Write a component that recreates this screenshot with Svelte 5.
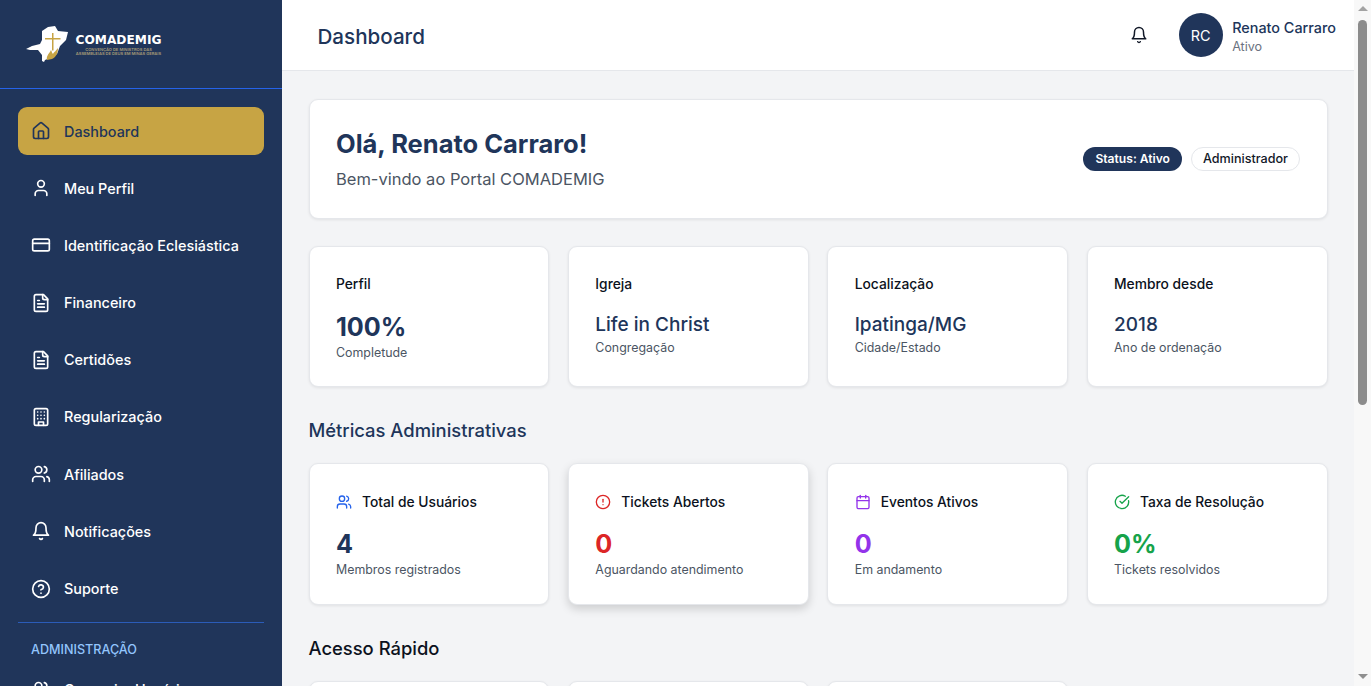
<script>
  const icons = {
    home: '<path d="M15 21v-8a1 1 0 0 0-1-1h-4a1 1 0 0 0-1 1v8"/><path d="M3 10a2 2 0 0 1 .709-1.528l7-5.999a2 2 0 0 1 2.582 0l7 5.999A2 2 0 0 1 21 10v9a2 2 0 0 1-2 2H5a2 2 0 0 1-2-2z"/>',
    user: '<path d="M19 21v-2a4 4 0 0 0-4-4H9a4 4 0 0 0-4 4v2"/><circle cx="12" cy="7" r="4"/>',
    card: '<rect width="20" height="14" x="2" y="5" rx="2"/><line x1="2" x2="22" y1="10" y2="10"/>',
    file: '<path d="M15 2H6a2 2 0 0 0-2 2v16a2 2 0 0 0 2 2h12a2 2 0 0 0 2-2V7Z"/><path d="M14 2v4a2 2 0 0 0 2 2h4"/><path d="M10 9H8"/><path d="M16 13H8"/><path d="M16 17H8"/>',
    building: '<rect width="16" height="20" x="4" y="2" rx="2"/><path d="M9 22v-4h6v4"/><path d="M8 6h.01M16 6h.01M12 6h.01M12 10h.01M12 14h.01M16 10h.01M16 14h.01M8 10h.01M8 14h.01"/>',
    users: '<path d="M16 21v-2a4 4 0 0 0-4-4H6a4 4 0 0 0-4 4v2"/><circle cx="9" cy="7" r="4"/><path d="M22 21v-2a4 4 0 0 0-3-3.87"/><path d="M16 3.13a4 4 0 0 1 0 7.75"/>',
    bell: '<path d="M6 8a6 6 0 0 1 12 0c0 7 3 9 3 9H3s3-2 3-9"/><path d="M10.3 21a1.94 1.94 0 0 0 3.4 0"/>',
    help: '<circle cx="12" cy="12" r="10"/><path d="M9.09 9a3 3 0 0 1 5.83 1c0 2-3 3-3 3"/><path d="M12 17h.01"/>',
    alert: '<circle cx="12" cy="12" r="10"/><line x1="12" x2="12" y1="8" y2="12"/><line x1="12" x2="12.01" y1="16" y2="16"/>',
    calendar: '<path d="M8 2v4"/><path d="M16 2v4"/><rect width="18" height="18" x="3" y="4" rx="2"/><path d="M3 10h18"/>',
    check: '<path d="M21.801 10A10 10 0 1 1 17 3.335"/><path d="m9 11 3 3L22 4"/>'
  };

  const nav = [
    { label: "Dashboard", icon: "home", active: true },
    { label: "Meu Perfil", icon: "user" },
    { label: "Identificação Eclesiástica", icon: "card" },
    { label: "Financeiro", icon: "file" },
    { label: "Certidões", icon: "file" },
    { label: "Regularização", icon: "building" },
    { label: "Afiliados", icon: "users" },
    { label: "Notificações", icon: "bell" },
    { label: "Suporte", icon: "help" }
  ];

  const info = [
    { title: "Perfil", value: "100%", note: "Completude", big: true },
    { title: "Igreja", value: "Life in Christ", note: "Congregação" },
    { title: "Localização", value: "Ipatinga/MG", note: "Cidade/Estado" },
    { title: "Membro desde", value: "2018", note: "Ano de ordenação" }
  ];

  const metrics = [
    { title: "Total de Usuários", value: "4", note: "Membros registrados", icon: "users", iconColor: "#2563eb", color: "#20355a" },
    { title: "Tickets Abertos", value: "0", note: "Aguardando atendimento", icon: "alert", iconColor: "#dc2626", color: "#dc2626", hover: true },
    { title: "Eventos Ativos", value: "0", note: "Em andamento", icon: "calendar", iconColor: "#9333ea", color: "#9333ea" },
    { title: "Taxa de Resolução", value: "0%", note: "Tickets resolvidos", icon: "check", iconColor: "#16a34a", color: "#16a34a" }
  ];
</script>

{#snippet icon(name, size, color)}
  <svg class="icon" width={size} height={size} viewBox="0 0 24 24" fill="none" stroke={color} stroke-width="2" stroke-linecap="round" stroke-linejoin="round">
    {@html icons[name]}
  </svg>
{/snippet}

<div class="page">
  <aside class="sidebar">
    <div class="brand">
      <svg class="state" width="43" height="37" viewBox="0 0 43 37">
        <path fill="#fff" d="M0 23 L6 20 L14 18 L16 14 L16 5 L22 1 L29 0 L32 5 L42 6 L40 14 L34 20 L31 28 L24 32 L19 34 L18 36 L16 35 L16 29 L12 24 L4 24 Z"/>
        <path fill="#c7a444" d="M21 34 C20 30 23 28 25 24 C26 26 26 27 27 28 C28 26 29 26 32 22 C32 27 30 31 26 33 Z"/>
        <path fill="#c7a444" d="M26 7 h1.500 v5 h7 v1.500 h-7 v11 h-1.500 v-11 h-7 v-1.500 h7 Z"/>
      </svg>
      <div class="brand-text">
        <span class="brand-name">COMADEMIG</span>
        <span class="brand-sub">CONVENÇÃO DE MINISTROS DAS</span>
        <span class="brand-sub">ASSEMBLEIAS DE DEUS EM MINAS GERAIS</span>
      </div>
    </div>

    <nav class="nav">
      {#each nav as item}
        <div class="nav-item" class:active={item.active}>
          {@render icon(item.icon, 20, item.active ? "#20355a" : "#fff")}
          <span>{item.label}</span>
        </div>
      {/each}
      <div class="nav-sep"></div>
      <div class="nav-heading">ADMINISTRAÇÃO</div>
      <div class="nav-item">
        {@render icon("users", 20, "#fff")}
        <span>Gerenciar Usuários</span>
      </div>
    </nav>
  </aside>

  <div class="main">
    <header class="topbar">
      <h1>Dashboard</h1>
      <div class="topbar-right">
        {@render icon("bell", 18, "#111827")}
        <div class="avatar">RC</div>
        <div class="who">
          <div class="who-name">Renato Carraro</div>
          <div class="who-status">Ativo</div>
        </div>
      </div>
    </header>

    <main class="content">
      <section class="card welcome">
        <div>
          <h2>Olá, Renato Carraro!</h2>
          <p>Bem-vindo ao Portal COMADEMIG</p>
        </div>
        <div class="badges">
          <span class="badge dark">Status: Ativo</span>
          <span class="badge light">Administrador</span>
        </div>
      </section>

      <section class="grid info">
        {#each info as c}
          <div class="card stat">
            <div class="stat-title">{c.title}</div>
            <div class="stat-value" class:big={c.big}>{c.value}</div>
            <div class="stat-note">{c.note}</div>
          </div>
        {/each}
      </section>

      <h3 class="section muted">Métricas Administrativas</h3>
      <section class="grid">
        {#each metrics as m}
          <div class="card stat" class:hover={m.hover}>
            <div class="stat-title with-icon">
              {@render icon(m.icon, 16, m.iconColor)}
              <span>{m.title}</span>
            </div>
            <div class="stat-value big" style="color: {m.color}">{m.value}</div>
            <div class="stat-note">{m.note}</div>
          </div>
        {/each}
      </section>

      <h3 class="section">Acesso Rápido</h3>
      <section class="grid">
        <div class="card quick"></div>
        <div class="card quick"></div>
        <div class="card quick"></div>
      </section>
    </main>
  </div>

  <div class="scrollbar">
    <span class="arrow up"></span>
    <div class="track"><div class="thumb"></div></div>
    <span class="arrow down"></span>
  </div>
</div>

<style>
  :global(body) {
    margin: 0;
    font-family: Inter, "Noto Sans", sans-serif;
    background: #f3f4f6;
  }
  .page {
    display: flex;
    height: 686px;
    overflow: hidden;
  }
  .icon {
    flex: none;
    display: block;
  }

  .sidebar {
    width: 282px;
    flex: none;
    background: #20355a;
    color: #fff;
    overflow: hidden;
  }
  .brand {
    box-sizing: border-box;
    border-bottom: 1px solid #2563eb;
    height: 89px;
    display: flex;
    align-items: center;
    gap: 6px;
    padding-left: 26px;
  }
  .brand-text {
    display: flex;
    flex-direction: column;
    align-items: center;
    width: 87px;
    padding-top: 1px;
  }
  .brand-name {
    font-family: "DejaVu Sans", sans-serif;
    font-weight: 700;
    font-size: 12.2px;
    line-height: 15px;
  }
  .brand-sub {
    font-size: 4.1px;
    line-height: 3.6px;
    color: #a89c78;
    white-space: nowrap;
    font-weight: 600;
  }
  .nav {
    padding: 18px 18px 0;
    display: flex;
    flex-direction: column;
    gap: 9.2px;
  }
  .nav-item {
    display: flex;
    align-items: center;
    gap: 13px;
    height: 48px;
    flex: none;
    box-sizing: border-box;
    padding: 0 13px;
    border-radius: 9px;
    font-size: 14.4px;
    font-weight: 500;
    white-space: nowrap;
  }
  .nav-item.active {
    background: #c7a444;
    color: #20355a;
  }
  .nav-sep {
    border-top: 1px solid #2b5cb8;
  }
  .nav-heading {
    color: #93c5fd;
    font-size: 12.6px;
    font-weight: 500;
    padding: 9px 13px 0;
    margin-bottom: -2.5px;
    line-height: 18px;
  }

  .main {
    flex: 1;
    min-width: 0;
    display: flex;
    flex-direction: column;
  }
  .topbar {
    height: 71px;
    flex: none;
    box-sizing: border-box;
    background: #fff;
    border-bottom: 1px solid #e5e7eb;
    display: flex;
    align-items: center;
    justify-content: space-between;
    padding: 0 18px 0 35.5px;
  }
  h1 {
    margin: 2px 0 0;
    font-size: 20.6px;
    font-weight: 500;
    color: #20355a;
  }
  .topbar-right {
    display: flex;
    align-items: center;
  }
  .avatar {
    width: 44px;
    height: 44px;
    border-radius: 50%;
    background: #20355a;
    color: #fff;
    font-size: 14.4px;
    display: flex;
    align-items: center;
    justify-content: center;
    margin: 0 9.5px 0 31px;
  }
  .who {
    margin-top: 3px;
  }
  .who-name {
    font-size: 14.4px;
    font-weight: 500;
    line-height: 20px;
    color: #20355a;
  }
  .who-status {
    font-size: 12.6px;
    line-height: 18px;
    color: #6b7280;
  }

  .content {
    padding: 28px 26.5px 0;
    flex: 1;
    overflow: hidden;
  }
  .card {
    background: #fff;
    border: 1px solid #e5e7eb;
    border-radius: 9px;
    box-shadow: 0 1px 3px rgba(0, 0, 0, 0.08);
    box-sizing: border-box;
  }
  .welcome {
    height: 119.5px;
    display: flex;
    align-items: center;
    justify-content: space-between;
    padding: 2px 26.5px 0;
    margin-bottom: 27px;
  }
  h2 {
    margin: 0 0 7px;
    font-size: 25.5px;
    line-height: 32px;
    font-weight: 700;
    color: #20355a;
  }
  .welcome p {
    margin: 0;
    font-size: 16.5px;
    line-height: 24px;
    color: #4b5563;
  }
  .badges {
    display: flex;
    gap: 9px;
    margin-top: -2px;
  }
  .badge {
    font-size: 12.6px;
    line-height: 18px;
    padding: 2px 11px;
    border-radius: 999px;
    font-weight: 500;
    box-sizing: border-box;
    border: 1px solid transparent;
  }
  .badge.dark {
    background: #20355a;
    color: #fff;
    font-weight: 600;
    font-size: 12.1px;
  }
  .badge.light {
    background: #fff;
    color: #111827;
    border-color: #e5e7eb;
  }

  .grid {
    display: grid;
    grid-template-columns: repeat(4, 1fr);
    gap: 18.4px;
  }
  .stat {
    height: 141.5px;
    padding: 27px 26.5px 0;
  }
  .stat.hover {
    box-shadow: 0 4px 10px rgba(0, 0, 0, 0.16);
  }
  .stat-title {
    font-size: 13.8px;
    line-height: 20px;
    font-weight: 500;
    color: #0b1120;
    margin-bottom: 17px;
  }
  .with-icon {
    display: flex;
    align-items: center;
    gap: 10px;
    margin-top: 1px;
    margin-bottom: 16px;
  }
  .stat-value {
    font-size: 19px;
    line-height: 27px;
    font-weight: 500;
    color: #20355a;
  }
  .stat-value.big {
    font-size: 25.2px;
    line-height: 32px;
    font-weight: 700;
  }
  .stat-note {
    font-size: 12.4px;
    line-height: 18px;
    color: #4b5563;
    margin-top: 1px;
  }
  .section {
    margin: 0;
    height: 76px;
    box-sizing: border-box;
    padding-top: 31px;
    font-size: 18.4px;
    line-height: 24px;
    font-weight: 500;
    color: #0b1120;
  }
  .section.muted {
    color: #20355a;
  }
  .quick {
    height: 120px;
  }

  .scrollbar {
    width: 17px;
    flex: none;
    background: #f8f8f8;
    display: flex;
    flex-direction: column;
    align-items: center;
  }
  .arrow {
    flex: none;
    width: 0;
    height: 0;
    border-left: 5px solid transparent;
    border-right: 5px solid transparent;
    margin: 6px 0;
  }
  .arrow.up {
    border-bottom: 5px solid #a3a3a3;
  }
  .arrow.down {
    border-top: 5px solid #8f8f8f;
    margin-bottom: 7px;
  }
  .track {
    flex: 1;
    width: 100%;
    display: flex;
    justify-content: center;
  }
  .thumb {
    width: 9px;
    height: 385px;
    margin-top: 3px;
    border-radius: 5px;
    background: #8c8c8c;
  }
</style>
